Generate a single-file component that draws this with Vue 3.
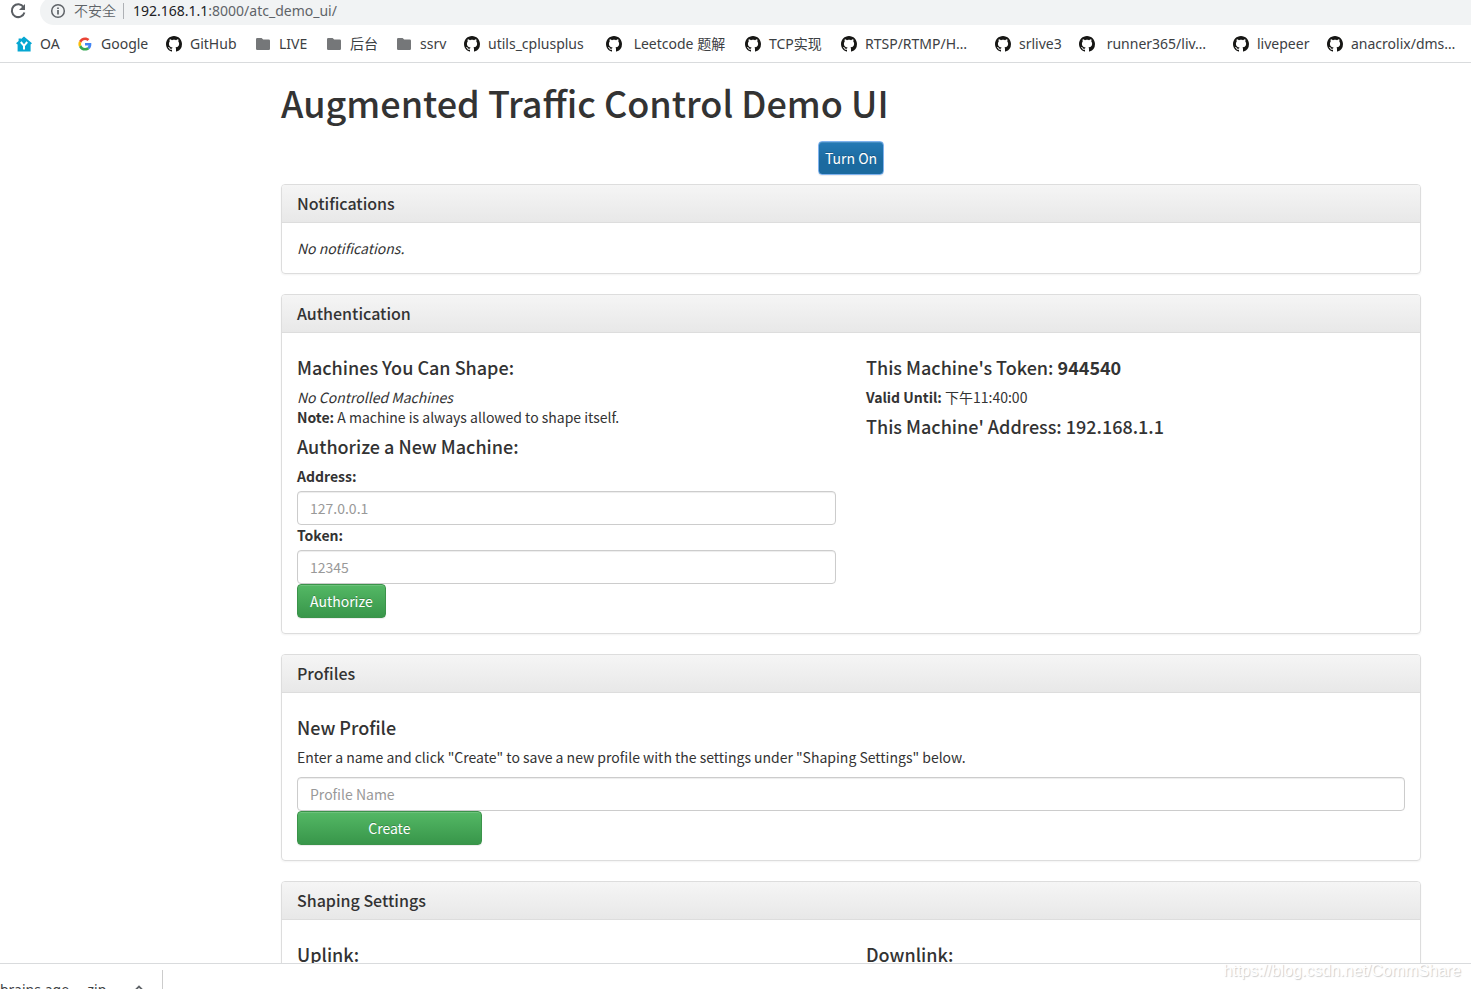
<script setup>
const bookmarks = [
  { icon: 'oa', label: 'OA' },
  { icon: 'google', label: 'Google' },
  { icon: 'github', label: 'GitHub' },
  { icon: 'folder', label: 'LIVE' },
  { icon: 'folder', label: '后台' },
  { icon: 'folder', label: 'ssrv' },
  { icon: 'github', label: 'utils_cplusplus' },
  { icon: 'github', label: ' Leetcode 题解' },
  { icon: 'github', label: 'TCP实现' },
  { icon: 'github', label: 'RTSP/RTMP/H…' },
  { icon: 'github', label: 'srlive3' },
  { icon: 'github', label: ' runner365/liv…' },
  { icon: 'github', label: 'livepeer' },
  { icon: 'github', label: 'anacrolix/dms…' },
]
</script>

<template>
  <div class="window">
    <header class="toolbar">
      <button class="reload" type="button" aria-label="Reload">
        <svg width="18" height="18" viewBox="0 0 18 18" fill="none">
          <path d="M14.6 5.2A6.4 6.4 0 1 0 15.4 10.4" stroke="#5a5e63" stroke-width="2" />
          <path d="M16 2v6h-6z" fill="#5a5e63" />
        </svg>
      </button>
      <div class="omnibox">
        <svg width="16" height="16" viewBox="0 0 16 16" fill="none" stroke="#5f6368">
          <circle cx="8" cy="8" r="6.3" stroke-width="1.5" />
          <path d="M8 7v4.4M8 4.4v1.6" stroke-width="1.7" />
        </svg>
        <span class="insecure">不安全</span>
        <span class="divider"></span>
        <span class="url"><b>192.168.1.1</b>:8000/atc_demo_ui/</span>
      </div>
    </header>

    <nav class="bookmarks">
      <a v-for="b in bookmarks" :key="b.label" href="#" class="bookmark">
        <svg v-if="b.icon === 'oa'" width="16" height="16" viewBox="0 0 16 16">
          <path d="M8 0.5 16 7.2 14.6 8.6V15.5H1.6V8.6L0 7.2 2.6 5V2.4H5V3z" fill="#06a7d2" />
          <path d="M4.8 6 8 9.8 11.2 6M8 9.4V13.4" stroke="#fff" stroke-width="2" fill="none" />
        </svg>
        <svg v-else-if="b.icon === 'google'" width="16" height="16" viewBox="-5 -5 58 58">
          <path fill="#ea4335" d="M24 9.5c3.54 0 6.71 1.22 9.21 3.6l6.85-6.85C35.9 2.38 30.47 0 24 0 14.62 0 6.51 5.38 2.56 13.22l7.98 6.19C12.43 13.72 17.74 9.5 24 9.5z" />
          <path fill="#4285f4" d="M46.98 24.55c0-1.57-.15-3.09-.38-4.55H24v9.02h12.94c-.58 2.96-2.26 5.48-4.78 7.18l7.73 6c4.51-4.18 7.09-10.36 7.09-17.65z" />
          <path fill="#fbbc05" d="M10.53 28.59A14.5 14.5 0 0 1 9.77 24c0-1.6.27-3.14.76-4.59l-7.98-6.19A23.9 23.9 0 0 0 0 24c0 3.88.92 7.54 2.56 10.78l7.97-6.19z" />
          <path fill="#34a853" d="M24 48c6.48 0 11.93-2.13 15.89-5.81l-7.73-6c-2.15 1.45-4.92 2.3-8.16 2.3-6.26 0-11.57-4.22-13.47-9.91l-7.98 6.19C6.51 42.62 14.62 48 24 48z" />
        </svg>
        <svg v-else-if="b.icon === 'github'" width="16" height="16" viewBox="0 0 16 16">
          <path fill="#161614" d="M8 0C3.58 0 0 3.58 0 8c0 3.54 2.29 6.53 5.47 7.59.4.07.55-.17.55-.38 0-.19-.01-.82-.01-1.49-2.01.37-2.53-.49-2.69-.94-.09-.23-.48-.94-.82-1.13-.28-.15-.68-.52-.01-.53.63-.01 1.08.58 1.23.82.72 1.21 1.87.87 2.33.66.07-.52.28-.87.51-1.07-1.78-.2-3.64-.89-3.64-3.95 0-.87.31-1.59.82-2.15-.08-.2-.36-1.02.08-2.12 0 0 .67-.21 2.2.82.64-.18 1.32-.27 2-.27s1.36.09 2 .27c1.53-1.04 2.2-.82 2.2-.82.44 1.1.16 1.92.08 2.12.51.56.82 1.27.82 2.15 0 3.07-1.87 3.75-3.65 3.95.29.25.54.73.54 1.48 0 1.07-.01 1.93-.01 2.2 0 .21.15.46.55.38A8.01 8.01 0 0 0 16 8c0-4.42-3.58-8-8-8z" />
        </svg>
        <svg v-else width="16" height="16" viewBox="0 0 16 16">
          <path fill="#757779" d="M2.2 2H6.6L8.2 3.6H13.8Q15 3.6 15 4.8V12.8Q15 14 13.8 14H2.2Q1 14 1 12.8V3.2Q1 2 2.2 2z" />
        </svg>
        <span class="bookmark-label">{{ b.label }}</span>
      </a>
    </nav>

    <main class="page">
      <h1>Augmented Traffic Control Demo UI</h1>
      <div class="power">
        <button type="button" class="btn btn-primary">Turn On</button>
      </div>

      <section class="panel">
        <h3 class="panel-title">Notifications</h3>
        <div class="panel-body"><i>No notifications.</i></div>
      </section>

      <section class="panel">
        <h3 class="panel-title">Authentication</h3>
        <div class="panel-body columns">
          <div>
            <h4>Machines You Can Shape:</h4>
            <div><i>No Controlled Machines</i></div>
            <div><b>Note:</b> A machine is always allowed to shape itself.</div>
            <h4>Authorize a New Machine:</h4>
            <label for="address">Address:</label>
            <input id="address" type="text" placeholder="127.0.0.1" />
            <label for="token">Token:</label>
            <input id="token" type="text" placeholder="12345" />
            <button type="button" class="btn btn-success">Authorize</button>
          </div>
          <div>
            <h4>This Machine's Token: <b>944540</b></h4>
            <div><b>Valid Until:</b> 下午11:40:00</div>
            <h4>This Machine' Address: 192.168.1.1</h4>
          </div>
        </div>
      </section>

      <section class="panel">
        <h3 class="panel-title">Profiles</h3>
        <div class="panel-body">
          <h4>New Profile</h4>
          <p>Enter a name and click "Create" to save a new profile with the settings under "Shaping Settings" below.</p>
          <input type="text" placeholder="Profile Name" aria-label="Profile Name" />
          <button type="button" class="btn btn-success create">Create</button>
        </div>
      </section>

      <section class="panel">
        <h3 class="panel-title">Shaping Settings</h3>
        <div class="panel-body columns">
          <h4>Uplink:</h4>
          <h4>Downlink:</h4>
        </div>
      </section>
    </main>

    <footer class="downloads">
      <div class="download">
        <span class="file">brains.age… .zip</span>
        <svg width="10" height="10" viewBox="0 0 10 10" fill="none">
          <path d="M1 5.5 5 1.5 9 5.5" stroke="#5f6368" stroke-width="1.8" />
        </svg>
      </div>
      <span class="watermark">https://blog.csdn.net/CommShare</span>
    </footer>
  </div>
</template>

<style>
body {
  margin: 0;
  background: #fff;
}
</style>

<style scoped>
* {
  box-sizing: border-box;
}

.window {
  display: flex;
  flex-direction: column;
  height: 100vh;
  overflow: hidden;
  color: #333;
  font: 14px/20px "Noto Sans CJK SC", sans-serif;
}

.toolbar {
  display: flex;
  flex: none;
  align-items: flex-end;
  height: 25px;
  overflow: hidden;
  font: 14px/28px "Noto Sans", "Noto Sans CJK SC", sans-serif;
}

.reload {
  display: flex;
  align-items: center;
  height: 28px;
  width: 40px;
  padding: 0 0 0 9px;
  border: 0;
  background: none;
}

.omnibox {
  display: flex;
  flex: 1;
  align-items: center;
  height: 28px;
  padding-left: 10px;
  border-radius: 14px 0 0 14px;
  background: #f1f3f4;
  color: #5f6368;
}

.insecure {
  margin-left: 8px;
  font-family: "Noto Sans CJK SC", sans-serif;
  font-weight: 350;
  line-height: 26px;
  padding-bottom: 2px;
}

.divider {
  width: 1px;
  height: 16px;
  margin: 0 9px 0 7px;
  background: #aeb1b5;
}

.url b {
  color: #202124;
  font-weight: 400;
}

.bookmarks {
  display: grid;
  flex: none;
  grid-template-columns: 61px 89px 89px 71px 70px 68px 142px 139px 96px 154px 84px 154px 94px 1fr;
  align-items: center;
  height: 38px;
  padding-left: 16px;
  border-bottom: 1px solid #d9dbdd;
}

.bookmark {
  display: flex;
  align-items: center;
  gap: 8px;
  color: #3c4043;
  font: 14px/20px "Noto Sans", "Noto Sans CJK SC", sans-serif;
  text-decoration: none;
  white-space: pre;
}

.bookmark svg {
  flex: none;
}

.page {
  flex: 1;
  min-height: 0;
  overflow: hidden;
  padding: 20px 50px 0 281px;
}

h1,
h3,
h4 {
  font-weight: 500;
}

h1 {
  margin: 0 0 19px;
  font-size: 36px;
  line-height: 39px;
}

h4 {
  margin: 10px 0;
  font-size: 18px;
  line-height: 19px;
}

p {
  margin: 0 0 10px;
}

.power {
  display: flex;
  justify-content: center;
  margin-bottom: 9px;
}

.panel {
  margin-bottom: 20px;
  border: 1px solid #ddd;
  border-radius: 4px;
  box-shadow: 0 1px 2px rgba(0, 0, 0, 0.05);
}

.panel-title {
  margin: 0;
  padding: 10px 15px;
  border-bottom: 1px solid #ddd;
  border-radius: 3px 3px 0 0;
  background: linear-gradient(#f5f5f5, #e8e8e8);
  font-size: 16px;
  line-height: 17px;
}

.panel-body {
  display: flow-root;
  padding: 15px;
}

.panel-body.columns {
  display: grid;
  grid-template-columns: 1fr 1fr;
  column-gap: 30px;
}

.columns > div {
  display: flow-root;
}

label {
  display: block;
  margin-bottom: 5px;
  font-weight: 700;
}

input {
  display: block;
  width: 100%;
  height: 34px;
  padding: 6px 12px;
  border: 1px solid #ccc;
  border-radius: 4px;
  background: #fff;
  box-shadow: inset 0 1px 1px rgba(0, 0, 0, 0.075);
  color: #555;
  font: inherit;
}

input::placeholder {
  color: #999;
  opacity: 1;
}

.btn {
  display: block;
  height: 34px;
  padding: 6px 12px;
  border: 1px solid;
  border-radius: 4px;
  box-shadow: inset 0 1px 0 rgba(255, 255, 255, 0.15), 0 1px 1px rgba(0, 0, 0, 0.075);
  color: #fff;
  font: inherit;
  text-shadow: 0 -1px 0 rgba(0, 0, 0, 0.2);
}

.btn-primary {
  padding: 6px;
  border-color: #7fb2ee;
  background: linear-gradient(#2579b5, #1b6a9f 60%);
}

.btn-success {
  border-color: #3b934a;
  background: linear-gradient(#54b865, #38964a);
}

.create {
  width: calc(100% / 6);
}

.downloads {
  display: flex;
  flex: none;
  justify-content: space-between;
  height: 26px;
  overflow: hidden;
  border-top: 1px solid #d9dbdd;
}

.download {
  display: flex;
  align-items: center;
  justify-content: space-between;
  width: 163px;
  height: 40px;
  margin-top: 6px;
  padding-right: 18px;
  border-right: 1px solid #ccc;
  color: #3c4043;
  font: 14px/20px "Noto Sans", sans-serif;
}

.watermark {
  padding: 0 10px 0 0;
  color: #fff;
  font: 16px/14px "Liberation Sans", sans-serif;
  text-shadow: 1px 1px 1px #ccc;
}
</style>
